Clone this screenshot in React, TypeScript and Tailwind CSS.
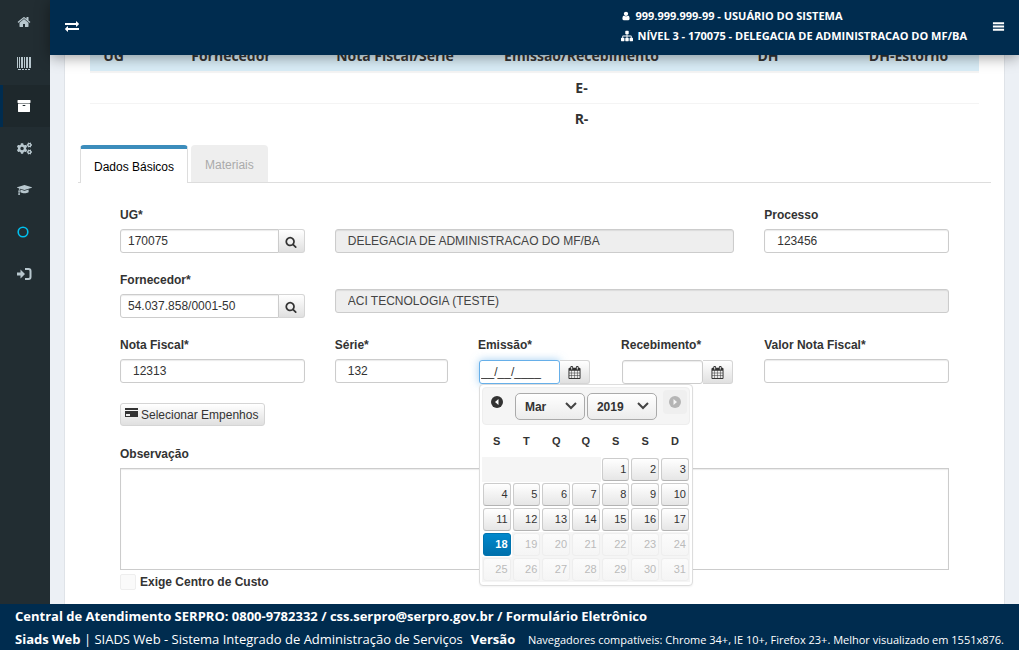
import type { ReactNode } from 'react'
import { FaCogs } from 'react-icons/fa'

type IconProps = { path: string; className?: string; viewBox?: string }

function Icon({ path, className = 'size-3.5', viewBox = '0 0 1792 1792' }: IconProps) {
  return (
    <svg viewBox={viewBox} className={className} fill="currentColor" aria-hidden="true">
      <path d={path} />
    </svg>
  )
}

const icons = {
  home: 'M1472 992v480q0 26-19 45t-45 19h-384v-384h-256v384h-384q-26 0-45-19t-19-45v-480q0-1 .5-3t.5-3l575-474 575 474q1 2 1 6zm223-69l-62 74q-8 9-21 11h-3q-13 0-21-7l-692-577-692 577q-12 8-24 7-13-2-21-11l-62-74q-8-10-7-23.500t11-21.500l719-599q32-26 76-26t76 26l244 204v-195q0-14 9-23t23-9h192q14 0 23 9t9 23v408l219 182q10 8 11 21.500t-7 23.500z',
  archive:
    'M1088 832q0-26-19-45t-45-19h-256q-26 0-45 19t-19 45 19 45 45 19h256q26 0 45-19t19-45zm576-192v960q0 26-19 45t-45 19h-1408q-26 0-45-19t-19-45v-960q0-26 19-45t45-19h1408q26 0 45 19t19 45zm64-448v256q0 26-19 45t-45 19h-1536q-26 0-45-19t-19-45v-256q0-26 19-45t45-19h1536q26 0 45 19t19 45z',
  cap: 'M1774 836l18 316q4 69-82 128t-235 93.500-323 34.500-323-34.500-235-93.500-82-128l18-316 574 181q22 7 48 7t48-7zm530-324q0 23-22 31l-1120 352q-4 1-10 1t-10-1l-652-206q-43 34-71 111.500t-34 178.500q63 36 63 109 0 69-58 107l58 433q2 14-8 25-9 11-24 11h-192q-15 0-24-11-10-11-8-25l58-433q-58-38-58-107 0-73 65-111 11-207 98-330l-333-104q-22-8-22-31t22-31l1120-352q4-1 10-1t10 1l1120 352q22 8 22 31z',
  exchange:
    'M1792 1184v192q0 13-9.500 22.500t-22.500 9.500h-1376v192q0 13-9.500 22.500t-22.500 9.500q-12 0-24-10l-319-320q-9-9-9-22 0-14 9-23l320-320q9-9 23-9 13 0 22.500 9.500t9.500 22.500v192h1376q13 0 22.500 9.500t9.500 22.500zm0-544q0 14-9 23l-320 320q-9 9-23 9-13 0-22.500-9.500t-9.500-22.500v-192h-1376q-13 0-22.500-9.500t-9.500-22.500v-192q0-13 9.500-22.500t22.500-9.500h1376v-192q0-14 9-23t23-9q12 0 24 10l319 319q9 9 9 23z',
  user: 'M1536 1399q0 109-62.500 187t-150.500 78h-854q-88 0-150.500-78t-62.500-187q0-85 8.500-160.500t31.500-152 58.500-131 94-89 134.500-34.500q131 128 313 128t313-128q76 0 134.500 34.500t94 89 58.500 131 31.500 152 8.500 160.500zm-256-887q0 159-112.500 271.500t-271.500 112.500-271.500-112.500-112.500-271.500 112.500-271.500 271.500-112.500 271.500 112.500 112.500 271.500z',
  sitemap:
    'M1792 1248v320q0 40-28 68t-68 28h-320q-40 0-68-28t-28-68v-320q0-40 28-68t68-28h96v-192h-512v192h96q40 0 68 28t28 68v320q0 40-28 68t-68 28h-320q-40 0-68-28t-28-68v-320q0-40 28-68t68-28h96v-192h-512v192h96q40 0 68 28t28 68v320q0 40-28 68t-68 28h-320q-40 0-68-28t-28-68v-320q0-40 28-68t68-28h96v-192q0-52 38-90t90-38h512v-192h-96q-40 0-68-28t-28-68v-320q0-40 28-68t68-28h320q40 0 68 28t28 68v320q0 40-28 68t-68 28h-96v192h512q52 0 90 38t38 90v192h96q40 0 68 28t28 68z',
  search:
    'M1216 832q0-185-131.500-316.500t-316.500-131.500-316.500 131.500-131.500 316.500 131.500 316.500 316.500 131.500 316.500-131.500 131.500-316.500zm512 832q0 52-38 90t-90 38q-54 0-90-38l-343-342q-179 124-399 124-143 0-273.500-55.500t-225-150-150-225-55.500-273.500 55.500-273.500 150-225 225-150 273.500-55.500 273.500 55.500 225 150 150 225 55.500 273.500q0 220-124 399l343 343q37 37 37 90z',
  calendar:
    'M192 1664h288v-288h-288v288zm352 0h320v-288h-320v288zm-352-352h288v-320h-288v320zm352 0h320v-320h-320v320zm-352-384h288v-288h-288v288zm736 736h320v-288h-320v288zm-384-736h320v-288h-320v288zm768 736h288v-288h-288v288zm-384-352h320v-320h-320v320zm-352-864v-288q0-13-9.500-22.500t-22.500-9.500h-64q-13 0-22.500 9.500t-9.500 22.500v288q0 13 9.500 22.500t22.500 9.500h64q13 0 22.500-9.500t9.500-22.500zm736 864h288v-320h-288v320zm-384-384h320v-288h-320v288zm384 0h288v-288h-288v288zm32-480v-288q0-13-9.500-22.500t-22.500-9.500h-64q-13 0-22.500 9.500t-9.500 22.500v288q0 13 9.500 22.500t22.500 9.500h64q13 0 22.500-9.500t9.500-22.500zm384-64v1280q0 52-38 90t-90 38h-1408q-52 0-90-38t-38-90v-1280q0-52 38-90t90-38h128v-96q0-66 47-113t113-47h64q66 0 113 47t47 113v96h384v-96q0-66 47-113t113-47h64q66 0 113 47t47 113v96h128q52 0 90 38t38 90z',
  bars: 'M128 320h1536v256h-1536zM128 768h1536v256h-1536zM128 1216h1536v256h-1536z',
}

const menu: { label: string; icon: ReactNode; active?: boolean }[] = [
  { label: 'Início', icon: <Icon path={icons.home} /> },
  {
    label: 'Código de barras',
    icon: (
      <Icon
        viewBox="0 0 14 14"
        path="M0 0h1v11h-1zM2 0h1v11h-1zM4 0h2v11h-2zM7 0h1v11h-1zM9 0h2v11h-2zM12 0h2v11h-2zM1 12h3v1h-3zM5 12h2v1h-2zM8 12h2v1h-2zM11 12h2v1h-2z"
      />
    ),
  },
  { label: 'Almoxarifado', icon: <Icon path={icons.archive} />, active: true },
  { label: 'Configurações', icon: <FaCogs className="size-[15px]" /> },
  { label: 'Treinamento', icon: <Icon path={icons.cap} viewBox="0 0 2304 1792" className="h-3 w-[15px]" /> },
  {
    label: 'Situação',
    icon: (
      <svg viewBox="0 0 12 12" className="size-3 text-[#00c0ef]" fill="none" stroke="currentColor" strokeWidth="1.6">
        <circle cx="6" cy="6" r="4.800" />
      </svg>
    ),
  },
  {
    label: 'Sair',
    icon: (
      <svg viewBox="0 0 15 14" className="h-3.5 w-[15px]" aria-hidden="true">
        <path d="M0 5.500h3.500v-3l4.500 4.500-4.500 4.500v-3h-3.500z" fill="currentColor" />
        <path
          d="M8 2h3.500q2 0 2 2v6q0 2-2 2h-3.500"
          fill="none"
          stroke="currentColor"
          strokeWidth="2"
        />
      </svg>
    ),
  },
]

const fieldClass =
  'block h-6 w-full rounded-[3px] border border-[#ccc] bg-white px-3 text-xs text-[#333] shadow-[inset_0_1px_1px_rgba(0,0,0,0.08)] outline-none'
const readOnlyClass =
  'block h-6 w-full rounded-[3px] border border-[#ccc] bg-[#eee] px-3 text-xs text-[#444] shadow-[inset_0_1px_1px_rgba(0,0,0,0.08)] outline-none'
const labelClass = 'mb-1 block text-xs leading-5 font-bold text-[#333]'
const addonClass =
  'flex h-6 shrink-0 items-center justify-center rounded-r-[3px] border border-l-0 border-[#d5d5d5] bg-linear-to-b from-white to-[#e0e0e0] pt-px text-[#333]'

function Sidebar() {
  return (
    <nav className="w-[50px] shrink-0 bg-[#222d32]">
      <ul className="pt-px">
        {menu.map((item) => (
          <li key={item.label}>
            <a
              href="#"
              aria-label={item.label}
              className={
                item.active
                  ? 'flex h-[42px] items-center border-l-3 border-[#002c4f] bg-[#1e282c] pl-3.5 text-white'
                  : 'flex h-[42px] items-center border-l-3 border-transparent pl-3.5 text-[#b8c7ce]'
              }
            >
              {item.icon}
            </a>
          </li>
        ))}
      </ul>
    </nav>
  )
}

function Header() {
  return (
    <header className="relative z-10 flex h-[55px] shrink-0 items-center justify-between bg-[#002c4f] pr-3.5 pb-[3px] pl-[15px] text-white shadow-[0_2px_14px_rgba(0,0,0,0.4)]">
      <button type="button" aria-label="Alternar menu">
        <Icon path={icons.exchange} />
      </button>
      <div className="flex items-center gap-[25px] font-['Open_Sans',sans-serif] text-[11px] leading-5 font-bold">
        <div>
          <p className="flex items-center gap-1">
            <Icon path={icons.user} className="size-2.5" />
            999.999.999-99 - USUÁRIO DO SISTEMA
          </p>
          <p className="flex items-center gap-1">
            <Icon path={icons.sitemap} className="size-3" />
            NÍVEL 3 - 170075 - DELEGACIA DE ADMINISTRACAO DO MF/BA
          </p>
        </div>
        <button type="button" aria-label="Opções">
          <Icon path={icons.bars} className="size-[13px]" />
        </button>
      </div>
    </header>
  )
}

function Summary() {
  return (
    <div className="px-[25px]">
      <table className="w-full table-fixed text-center font-['Open_Sans',sans-serif] text-sm leading-5 font-bold text-[#333]">
        <colgroup>
          <col className="w-[47px]" />
          <col className="w-[188px]" />
          <col className="w-[140px]" />
          <col className="w-[233px]" />
          <col className="w-[140px]" />
          <col className="w-[141px]" />
        </colgroup>
        <thead className="border-b-2 border-[#f4f4f4] bg-[#d9edf7]">
          <tr>
            <th className="py-[5px]">UG</th>
            <th className="py-[5px]">Fornecedor</th>
            <th className="py-[5px]">Nota Fiscal/Série</th>
            <th className="py-[5px]">Emissão/Recebimento</th>
            <th className="py-[5px]">DH</th>
            <th className="py-[5px]">DH-Estorno</th>
          </tr>
        </thead>
        <tbody>
          <tr className="border-b border-[#f4f4f4]">
            <td colSpan={3} />
            <td className="py-[5px]">E-</td>
            <td colSpan={2} />
          </tr>
          <tr>
            <td colSpan={3} />
            <td className="py-[5px]">R-</td>
            <td colSpan={2} />
          </tr>
        </tbody>
      </table>
    </div>
  )
}

function Tabs() {
  return (
    <div role="tablist" className="mx-[13px] mt-[11px] flex gap-[3px] border-b border-[#ddd] pl-0.5 text-xs">
      <button
        type="button"
        role="tab"
        aria-selected="true"
        className="-mb-px h-[38px] rounded-t border-x border-t-4 border-x-[#ddd] border-t-[#3c8dbc] bg-white px-[13px] pt-px text-black"
      >
        Dados Básicos
      </button>
      <button
        type="button"
        role="tab"
        aria-selected="false"
        className="h-[37px] rounded-t bg-[#eee] px-3.5 pt-0.5 text-[#aaa]"
      >
        Materiais
      </button>
    </div>
  )
}

const weeks = [
  [0, 0, 0, 0, 1, 2, 3],
  [4, 5, 6, 7, 8, 9, 10],
  [11, 12, 13, 14, 15, 16, 17],
  [18, 19, 20, 21, 22, 23, 24],
  [25, 26, 27, 28, 29, 30, 31],
]
const today = 18

function dayClass(day: number) {
  if (day === today)
    return 'block h-[23px] w-full rounded-[3px] border border-[#0073ae] bg-linear-to-b from-[#0088cc] to-[#0070ac] pr-0.5 text-right font-bold text-white'
  if (day > today)
    return 'block h-[23px] w-full rounded-[3px] border border-[#eee] bg-linear-to-b from-[#fbfbfb] to-[#f5f5f5] pr-0.5 text-right text-[#bbb]'
  return 'block h-[23px] w-full rounded-[3px] border border-[#ccc] border-b-[#b3b3b3] bg-linear-to-b from-white to-[#e6e6e6] pr-0.5 text-right text-[#333]'
}

function CalendarSelect({ label, value }: { label: string; value: string }) {
  return (
    <div className="relative">
      <select
        aria-label={label}
        defaultValue={value}
        className="h-[27px] w-[70px] appearance-none rounded-[5px] border border-[#aaa] bg-linear-to-b from-white to-[#ececec] pl-[9px] text-xs font-bold text-[#333]"
      >
        <option>{value}</option>
      </select>
      <svg
        viewBox="0 0 12 8"
        className="pointer-events-none absolute top-[9px] right-2 h-2 w-3"
        fill="none"
        stroke="#444"
        strokeWidth="2"
      >
        <path d="M1 1l5 5 5-5" />
      </svg>
    </div>
  )
}

function Calendar() {
  return (
    <div className="absolute top-full left-px z-10 w-[214px] rounded border border-[#ddd] bg-white p-0.5 shadow-xs">
      <div className="flex h-[38px] items-start justify-between rounded border border-[#eee] bg-[#f5f5f5] px-0.5 pt-0.5">
        <button type="button" aria-label="Anterior" className="flex size-6 items-center justify-center">
          <svg viewBox="0 0 12 12" className="size-3">
            <circle cx="6" cy="6" r="6" fill="#333" />
            <path d="M7.500 3v6l-3.500-3z" fill="#fff" />
          </svg>
        </button>
        <div className="flex gap-0.5 pt-[3px]">
          <CalendarSelect label="Mês" value="Mar" />
          <CalendarSelect label="Ano" value="2019" />
        </div>
        <button type="button" aria-label="Próximo" className="flex size-6 items-center justify-center rounded bg-[#efefef]">
          <svg viewBox="0 0 12 12" className="size-3">
            <circle cx="6" cy="6" r="6" fill="#b5b5b5" />
            <path d="M4.500 3v6l3.500-3z" fill="#f5f5f5" />
          </svg>
        </button>
      </div>
      <table className="mb-px w-full table-fixed text-[11px] text-[#333]">
        <thead>
          <tr className="h-8">
            {['S', 'T', 'Q', 'Q', 'S', 'S', 'D'].map((name, i) => (
              <th key={i}>{name}</th>
            ))}
          </tr>
        </thead>
        <tbody>
          {weeks.map((week, i) => (
            <tr key={i} className="h-[25px]">
              {week.map((day, j) => (
                <td key={j} className={day === 0 || day > today ? 'bg-[#f5f5f5] p-px' : 'p-px'}>
                  {day > 0 && (
                    <button type="button" disabled={day > today} className={dayClass(day)}>
                      {day}
                    </button>
                  )}
                </td>
              ))}
            </tr>
          ))}
        </tbody>
      </table>
    </div>
  )
}

function SearchField({ id, label, value }: { id: string; label: string; value: string }) {
  return (
    <div className="col-span-3">
      <label htmlFor={id} className={labelClass}>
        {label}
      </label>
      <div className="flex">
        <input
          id={id}
          defaultValue={value}
          className="h-6 w-full min-w-0 rounded-l-[3px] border border-[#ccc] bg-white px-[7px] text-xs text-[#333] shadow-[inset_0_1px_1px_rgba(0,0,0,0.08)] outline-none"
        />
        <button type="button" aria-label={`Pesquisar ${label}`} className={`${addonClass} w-[26px]`}>
          <Icon path={icons.search} className="size-3" />
        </button>
      </div>
    </div>
  )
}

function Form() {
  return (
    <form className="px-[55px] pt-[22px]">
      <div className="grid grid-cols-12 gap-x-[30px] gap-y-[17px]">
        <SearchField id="ug" label="UG*" value="170075" />
        <div className="col-span-6 pt-6">
          <input aria-label="Nome da UG" readOnly value="DELEGACIA DE ADMINISTRACAO DO MF/BA" className={readOnlyClass} />
        </div>
        <div className="col-span-3">
          <label htmlFor="processo" className={labelClass}>
            Processo
          </label>
          <input id="processo" defaultValue="123456" className={fieldClass} />
        </div>

        <SearchField id="fornecedor" label="Fornecedor*" value="54.037.858/0001-50" />
        <div className="col-span-9 pt-[19px]">
          <input aria-label="Nome do fornecedor" readOnly value="ACI TECNOLOGIA (TESTE)" className={readOnlyClass} />
        </div>

        <div className="col-span-3">
          <label htmlFor="nota" className={labelClass}>
            Nota Fiscal*
          </label>
          <input id="nota" defaultValue="12313" className={fieldClass} />
        </div>
        <div className="col-span-2">
          <label htmlFor="serie" className={labelClass}>
            Série*
          </label>
          <input id="serie" defaultValue="132" className={fieldClass} />
        </div>
        <div className="relative col-span-2">
          <label htmlFor="emissao" className={labelClass}>
            Emissão*
          </label>
          <div className="flex px-px pt-px">
            <input
              id="emissao"
              defaultValue="__/__/____"
              className="h-6 w-full min-w-0 rounded-[3px] border border-[#66afe9] bg-white px-px text-xs text-[#333] shadow-[0_0_8px_rgba(102,175,233,0.6)] outline-none"
            />
            <button type="button" aria-label="Abrir calendário de emissão" className={`${addonClass} w-[30px]`}>
              <Icon path={icons.calendar} className="size-[13px]" />
            </button>
          </div>
          <Calendar />
        </div>
        <div className="col-span-2">
          <label htmlFor="recebimento" className={labelClass}>
            Recebimento*
          </label>
          <div className="flex px-px pt-px">
            <input
              id="recebimento"
              className="h-6 w-full min-w-0 rounded-[3px] border border-[#ccc] bg-white px-px text-xs text-[#333] shadow-[inset_0_1px_1px_rgba(0,0,0,0.08)] outline-none"
            />
            <button type="button" aria-label="Abrir calendário de recebimento" className={`${addonClass} w-[30px]`}>
              <Icon path={icons.calendar} className="size-[13px]" />
            </button>
          </div>
        </div>
        <div className="col-span-3">
          <label htmlFor="valor" className={labelClass}>
            Valor Nota Fiscal*
          </label>
          <input id="valor" className={fieldClass} />
        </div>
      </div>

      <button
        type="button"
        className="mt-[19px] flex h-[23px] items-center gap-[3px] rounded-[3px] border border-[#d5d5d5] bg-linear-to-b from-white to-[#e0e0e0] pr-1.5 pl-1 text-xs text-[#333]"
      >
        <svg viewBox="0 0 13 13" className="size-[13px]" aria-hidden="true">
          <path d="M0 0h13v2h-13zM0 3h13v6h-13zM1 6v2h4v-2z" fill="#333" fillRule="evenodd" />
        </svg>
        Selecionar Empenhos
      </button>

      <div className="mt-[18px]">
        <label htmlFor="observacao" className={labelClass}>
          Observação
        </label>
        <textarea
          id="observacao"
          className="block h-[102px] w-full resize-none border border-[#ccc] bg-white px-3 py-1 text-xs shadow-[inset_0_1px_1px_rgba(0,0,0,0.08)] outline-none"
        />
      </div>

      <label className="mt-[3px] flex items-center gap-1 text-xs leading-[18px] font-bold text-[#333]">
        <input type="checkbox" className="size-4 appearance-none rounded-xs border border-[#eee] bg-[#fafafa]" />
        Exige Centro de Custo
      </label>
    </form>
  )
}

function Footer() {
  return (
    <footer className="flex shrink-0 flex-col bg-[#002c4f] px-[15px] font-['Open_Sans',sans-serif] text-[13px] text-white">
      <p className="leading-6 font-bold">
        Central de Atendimento SERPRO: 0800-9782332 / <a href="mailto:css.serpro@serpro.gov.br">css.serpro@serpro.gov.br</a> /{' '}
        <a href="#">Formulário Eletrônico</a>
      </p>
      <div className="flex items-center justify-between pt-px leading-[21px]">
        <p className="flex gap-2">
          <span>
            <strong>Siads Web</strong> | SIADS Web - Sistema Integrado de Administração de Serviços
          </span>
          <strong>Versão</strong>
        </p>
        <p className="text-[11px]">
          Navegadores compatíveis: Chrome 34+, IE 10+, Firefox 23+. Melhor visualizado em 1551x876.
        </p>
      </div>
    </footer>
  )
}

export default function App() {
  return (
    <div className="flex h-screen flex-col overflow-hidden font-['Liberation_Sans',Arial,sans-serif]">
      <div className="flex min-h-0 flex-1">
        <Sidebar />
        <div className="flex min-w-0 flex-1 flex-col">
          <Header />
          <main className="min-h-0 flex-1 overflow-hidden bg-[#ecf0f5] px-3.5">
            <div className="-mt-3.5 min-h-full border-x border-[#dfe3e8] bg-white pb-3.5">
              <Summary />
              <Tabs />
              <Form />
            </div>
          </main>
        </div>
      </div>
      <Footer />
    </div>
  )
}
